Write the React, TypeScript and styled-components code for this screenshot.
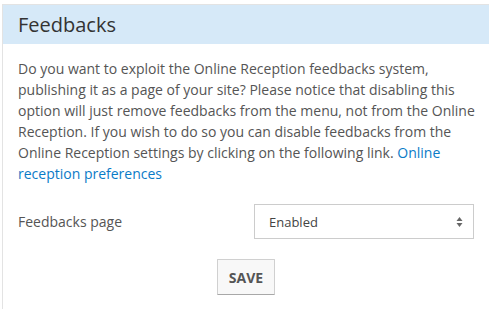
import styled, { createGlobalStyle } from 'styled-components';

const GlobalStyle = createGlobalStyle`
  html, body {
    margin: 0;
    padding: 0;
    background: #fff;
    overflow: hidden;
  }
  body {
    font-family: 'Open Sans', 'Liberation Sans', sans-serif;
    color: #555;
  }
`;

const Panel = styled.section`
  width: 489px;
  margin: 4px 0 0 2px;
  border: 1px solid #e3e3e3;
  border-right: none;
  border-bottom: none;
  background: #fff;
`;

const PanelHeading = styled.h2`
  margin: 0;
  height: 39px;
  padding: 0 15px;
  display: flex;
  align-items: center;
  background: #d6e9f8;
  font-size: 20px;
  font-weight: 400;
  color: #333;
`;

const PanelBody = styled.div`
  padding: 14px 15px;
  width: 456px;
`;

const Intro = styled.p`
  margin: 0;
  width: 464px;
  font-size: 14px;
  line-height: 21px;
  color: #555;
`;

const PrefLink = styled.a`
  color: #0a7bc7;
  text-decoration: none;
`;

const FormRow = styled.div`
  display: grid;
  grid-template-columns: 1fr 220px;
  align-items: center;
  margin-top: 20px;
`;

const Label = styled.label`
  font-size: 14px;
  color: #555;
`;

const SelectBox = styled.div`
  position: relative;
  height: 35px;
  box-sizing: border-box;
  border: 1px solid #ccc;
  display: flex;
  align-items: center;
  padding: 0 14px;
  font-size: 13px;
  color: #444;
`;

const Arrows = styled.svg`
  position: absolute;
  right: 10px;
  top: 50%;
  transform: translateY(-50%);
`;

const Actions = styled.div`
  display: flex;
  justify-content: center;
  margin-top: 20px;
`;

const SaveButton = styled.button`
  width: 58px;
  height: 36px;
  box-sizing: border-box;
  background: #f8f8f8;
  border: 1px solid #d0d0d0;
  border-bottom-color: #a8a8a8;
  border-radius: 1px;
  font-family: inherit;
  font-size: 14px;
  font-weight: 700;
  color: #555;
  cursor: pointer;
`;

export default function App() {
  return (
    <>
      <GlobalStyle />
      <Panel>
        <PanelHeading>Feedbacks</PanelHeading>
        <PanelBody>
          <Intro>
            Do you want to exploit the Online Reception feedbacks system,
            publishing it as a page of your site? Please notice that disabling this
            option will just remove feedbacks from the menu, not from the Online
            Reception. If you wish to do so you can disable feedbacks from the
            Online Reception settings by clicking on the following link.{' '}
            <PrefLink href="#">Online reception preferences</PrefLink>
          </Intro>
          <FormRow>
            <Label>Feedbacks page</Label>
            <SelectBox>
              Enabled
              <Arrows width="7" height="11" viewBox="0 0 7 11">
                <path d="M3.5 0.5 L6.5 4.5 H0.5 Z" fill="#666" />
                <path d="M3.5 10.5 L6.5 6.5 H0.5 Z" fill="#666" />
              </Arrows>
            </SelectBox>
          </FormRow>
          <Actions>
            <SaveButton>SAVE</SaveButton>
          </Actions>
        </PanelBody>
      </Panel>
    </>
  );
}
